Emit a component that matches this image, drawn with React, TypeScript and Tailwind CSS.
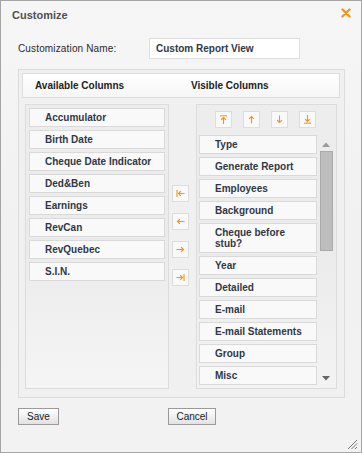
const available = [
  "Accumulator",
  "Birth Date",
  "Cheque Date Indicator",
  "Ded&Ben",
  "Earnings",
  "RevCan",
  "RevQuebec",
  "S.I.N.",
];

const visible = [
  "Type",
  "Generate Report",
  "Employees",
  "Background",
  "Cheque before stub?",
  "Year",
  "Detailed",
  "E-mail",
  "E-mail Statements",
  "Group",
  "Misc",
];

const ORANGE = "#f0961e";

// small orange arrows used on the move buttons
function MoveIcon({ kind }: { kind: string }) {
  const p = { stroke: ORANGE, strokeWidth: 1.1, fill: "none", strokeLinecap: "square" as const };
  return (
    <svg width="9" height="9" viewBox="0 0 9 9">
      {kind === "first" && (
        <>
          <path d="M1 1.5 V7.5" {...p} />
          <path d="M2.5 4.5 H8 M2.5 4.5 L4.5 2.5 M2.5 4.5 L4.5 6.5" {...p} />
        </>
      )}
      {kind === "left" && <path d="M1.5 4.5 H8 M1.5 4.5 L3.5 2.5 M1.5 4.5 L3.5 6.5" {...p} />}
      {kind === "right" && <path d="M1 4.5 H7.5 M7.5 4.5 L5.5 2.5 M7.5 4.5 L5.5 6.5" {...p} />}
      {kind === "last" && (
        <>
          <path d="M8 1.5 V7.5" {...p} />
          <path d="M1 4.5 H6.5 M6.5 4.5 L4.5 2.5 M6.5 4.5 L4.5 6.5" {...p} />
        </>
      )}
      {kind === "top" && (
        <>
          <path d="M1.5 0.8 H7.5" {...p} />
          <path d="M4.5 2.5 V8.5 M4.5 2.5 L2.5 4.5 M4.5 2.5 L6.5 4.5" {...p} />
        </>
      )}
      {kind === "up" && <path d="M4.5 1.5 V8 M4.5 1.5 L2.5 3.5 M4.5 1.5 L6.5 3.5" {...p} />}
      {kind === "down" && <path d="M4.5 1 V7.5 M4.5 7.5 L2.5 5.5 M4.5 7.5 L6.5 5.5" {...p} />}
      {kind === "bottom" && (
        <>
          <path d="M4.5 0.5 V6.5 M4.5 6.5 L2.5 4.5 M4.5 6.5 L6.5 4.5" {...p} />
          <path d="M1.5 8.2 H7.5" {...p} />
        </>
      )}
    </svg>
  );
}

function IconButton({ kind }: { kind: string }) {
  return (
    <div className="flex h-[17px] w-[17px] items-center justify-center border border-[#dddddd] bg-[#f9f9f9]">
      <MoveIcon kind={kind} />
    </div>
  );
}

function Item({ label, tall }: { label: string; tall?: boolean }) {
  return (
    <div
      className={`flex shrink-0 items-center border border-[#d9d9d9] bg-[#f9f9f9] pl-[15px] pr-[4px] text-[10px] font-bold leading-[11px] text-[#303846] ${
        tall ? "h-[30px]" : "h-[19px]"
      }`}
    >
      {label}
    </div>
  );
}

export default function App() {
  return (
    <div
      className="relative flex h-[453px] w-[362px] flex-col border border-[#a5a5a5] bg-gradient-to-b from-[#f6f6f6] via-[#f1f1f1] to-[#f2f2f2] text-[#333]"
      style={{ fontFamily: '"Liberation Sans", Arial, sans-serif' }}
    >
      <div className="flex h-[28px] items-start justify-between pl-[11px] pr-[10px] pt-[7px]">
        <span className="text-[11px] font-bold leading-[15px] text-[#505050]">Customize</span>
        <svg width="10" height="10" viewBox="0 0 10 10" className="mt-[0px]">
          <path d="M1.5 1.5 L8.5 8.5 M8.5 1.5 L1.5 8.5" stroke={ORANGE} strokeWidth="2.4" strokeLinecap="round" />
        </svg>
      </div>

      <div className="mt-[9px] flex h-[21px] items-center pl-[17px]">
        <span className="w-[131px] text-[10px] leading-[12px] tracking-[0.15px] text-[#2a2a2a]">
          Customization Name:
        </span>
        <div className="flex h-[21px] w-[151px] items-center border border-[#dedede] bg-white pl-[6px] text-[10px] font-bold text-[#303846]">
          Custom Report View
        </div>
      </div>

      <div className="ml-[17px] mt-[10px] flex h-[329px] w-[327px] flex-col border border-[#dcdcdc] bg-[#f0f0f0] p-[3px]">
        <div className="flex h-[25px] w-[318px] items-center border border-[#dddddd] bg-gradient-to-b from-white to-[#f6f6f6] pl-[12px] text-[10px] font-bold text-[#222]">
          <span className="w-[156px]">Available Columns</span>
          <span>Visible Columns</span>
        </div>

        <div className="mt-[6px] flex">
          <div className="ml-[3px] flex h-[285px] w-[144px] flex-col gap-[3px] border border-[#dcdcdc] bg-gradient-to-b from-[#ededed] via-[#ebebeb] to-[#f5f5f5] p-[3px]">
            {available.map((name) => (
              <Item key={name} label={name} />
            ))}
          </div>

          <div className="flex w-[27px] flex-col gap-[11px] pl-[3px] pt-[81px]">
            <IconButton kind="first" />
            <IconButton kind="left" />
            <IconButton kind="right" />
            <IconButton kind="last" />
          </div>

          <div className="flex h-[285px] w-[141px] flex-col overflow-hidden border border-[#dcdcdc] bg-gradient-to-b from-[#ededed] via-[#ebebeb] to-[#f3f3f3]">
            <div className="flex gap-[11px] pl-[18px] pt-[6px]">
              <IconButton kind="top" />
              <IconButton kind="up" />
              <IconButton kind="down" />
              <IconButton kind="bottom" />
            </div>
            <div className="mt-[7px] flex min-h-0 flex-1">
              <div className="flex w-[120px] flex-col gap-[3px] pl-[2px]">
                {visible.map((name) => (
                  <Item key={name} label={name} tall={name === "Cheque before stub?"} />
                ))}
              </div>
              <div className="ml-[1px] flex w-[16px] flex-col items-center">
                <svg width="8" height="5" viewBox="0 0 8 5" className="mt-[7px]">
                  <path d="M0 5 L4 0.5 L8 5 Z" fill="#9a9a9a" />
                </svg>
                <div className="mt-[4px] h-[100px] w-[13px] border border-[#a9a9a9] bg-[#bdbdbd]" />
                <div className="flex-1" />
                <svg width="8" height="5" viewBox="0 0 8 5" className="mb-[7px]">
                  <path d="M0 0 L4 4.5 L8 0 Z" fill="#666" />
                </svg>
              </div>
            </div>
          </div>
        </div>
      </div>

      <div className="ml-[17px] mt-[10px] flex">
        <button className="h-[17px] w-[41px] border border-[#9a9a9a] bg-gradient-to-b from-white to-[#e2e2e2] text-[10px] leading-[15px] text-[#222]">
          Save
        </button>
        <button className="ml-[109px] h-[17px] w-[48px] border border-[#9a9a9a] bg-gradient-to-b from-white to-[#e2e2e2] text-[10px] leading-[15px] text-[#222]">
          Cancel
        </button>
      </div>

      <svg width="11" height="11" viewBox="0 0 11 11" className="absolute bottom-[2px] right-[3px]">
        <path d="M1 10 L10 1 M4.5 10 L10 4.5 M8 10 L10 8" stroke="#777" strokeWidth="1" />
      </svg>
    </div>
  );
}
